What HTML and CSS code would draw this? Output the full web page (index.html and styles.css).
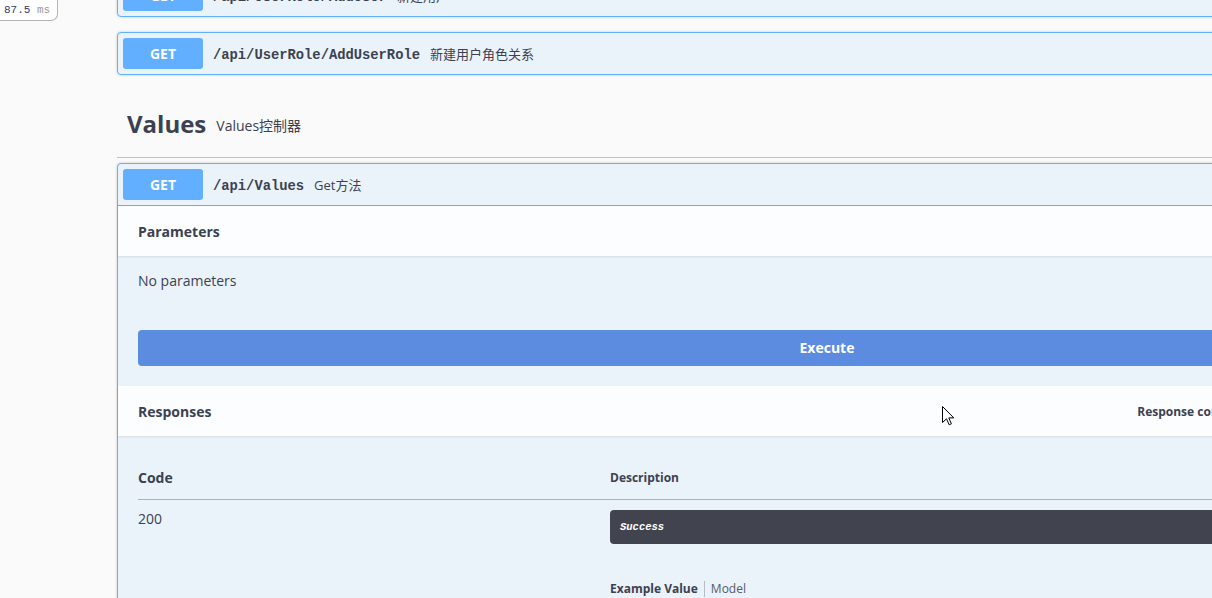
FILE: index.html
```html
<!DOCTYPE html>
<html>
<head>
<meta charset="utf-8">
<link rel="stylesheet" href="styles.css">
</head>
<body>
<div class="timer"><span class="num">87.5</span> <span class="unit">ms</span></div>

<div class="page">
  <div class="opblock">
    <div class="summary">
      <span class="method">GET</span>
      <span class="path">/api/UserRole/AddUser</span>
      <span class="desc">新建用户</span>
    </div>
  </div>

  <div class="opblock">
    <div class="summary">
      <span class="method">GET</span>
      <span class="path">/api/UserRole/AddUserRole</span>
      <span class="desc">新建用户角色关系</span>
    </div>
  </div>

  <h4 class="tag">
    <span class="tag-name">Values</span>
    <span class="tag-desc">Values控制器</span>
  </h4>

  <div class="opblock open">
    <div class="summary">
      <span class="method">GET</span>
      <span class="path">/api/Values</span>
      <span class="desc">Get方法</span>
    </div>
    <div class="section-header">
      <h5>Parameters</h5>
    </div>
    <div class="desc-wrapper">
      <p>No parameters</p>
    </div>
    <div class="exec-wrapper">
      <button class="execute">Execute</button>
    </div>
    <div class="section-header">
      <h5>Responses</h5>
      <label class="ctype">Response content type</label>
      <div class="ctype-select"></div>
    </div>
    <div class="responses-inner">
      <table class="responses">
        <thead>
          <tr><th class="col-code">Code</th><th class="col-desc">Description</th></tr>
        </thead>
        <tbody>
          <tr>
            <td class="col-code">200</td>
            <td class="col-desc">
              <div class="markdown">Success</div>
              <div class="tabs"><span class="tab active">Example Value</span><span class="tab">Model</span></div>
            </td>
          </tr>
        </tbody>
      </table>
    </div>
  </div>
</div>

<svg class="cursor" width="13" height="20" viewBox="0 0 13 20">
  <path d="M0.5 0.5 L0.5 16.5 L4.5 12.8 L7.2 18.8 L9.4 17.8 L6.8 11.9 L11.8 11.9 Z" fill="#fff" stroke="#000" stroke-width="1" stroke-linejoin="miter"/>
</svg>
</body>
</html>
```

FILE: styles.css
```css
html, body {
  margin: 0;
  padding: 0;
}
body {
  background: #fafafa;
  overflow: hidden;
  width: 1212px;
  height: 598px;
  position: relative;
  font-family: "Open Sans", "Noto Sans CJK SC", sans-serif;
  color: #3b4151;
}

.timer {
  position: absolute;
  left: 0;
  top: 0;
  width: 58px;
  height: 21px;
  box-sizing: border-box;
  border: 1px solid #b4b4b4;
  border-left: none;
  border-top: none;
  border-bottom-right-radius: 7px;
  background: #fff;
  font-family: "Liberation Mono", monospace;
  font-size: 11px;
  line-height: 20px;
  padding-left: 4px;
  z-index: 5;
}
.timer .num { color: #2f3b66; }
.timer .unit { color: #9a9a9a; }

.page {
  margin-top: -26px;
  margin-left: 117px;
  width: 1420px;
}

.opblock {
  border: 1px solid #61affe;
  border-radius: 4px;
  background: #ebf3fa;
  box-shadow: 0 0 3px rgba(0, 0, 0, 0.19);
  margin-bottom: 15px;
}
.opblock.open {
  margin-bottom: 0;
}

.summary {
  display: flex;
  align-items: center;
  padding: 5px;
  height: 31px;
}
.open .summary {
  border-bottom: 1px solid #61affe;
}

.method {
  display: flex;
  align-items: center;
  justify-content: center;
  width: 80px;
  height: 31px;
  border-radius: 3px;
  background: #61affe;
  color: #fff;
  font-weight: 700;
  font-size: 14px;
}
.path {
  font-family: "Liberation Mono", monospace;
  font-weight: 700;
  font-size: 13.8px;
  padding: 3px 10px 0;
  color: #3b4151;
}
.desc {
  font-size: 13px;
  color: #3b4151;
}

.tag {
  margin: 0 0 5px;
  height: 67px;
  display: flex;
  align-items: center;
  padding: 0 20px 0 10px;
  border-bottom: 1px solid rgba(59, 65, 81, 0.3);
  font-weight: 400;
}
.tag-name {
  font-size: 24px;
  font-weight: 700;
  margin-right: 10px;
}
.tag-desc {
  font-size: 14px;
  padding-top: 2px;
}

.section-header {
  display: flex;
  align-items: center;
  height: 50px;
  padding: 0 20px;
  background: rgba(255, 255, 255, 0.8);
  box-shadow: 0 1px 2px rgba(0, 0, 0, 0.1);
}
.section-header h5 {
  margin: 0;
  font-size: 14px;
  font-weight: 700;
}
.ctype {
  margin-left: auto;
  font-size: 12px;
  font-weight: 700;
  margin-right: 10px;
}
.ctype-select {
  width: 232px;
}

.desc-wrapper {
  padding: 16px 20px 20px;
}
.desc-wrapper p {
  margin: 0;
  font-size: 14px;
  line-height: 18px;
}

.exec-wrapper {
  padding: 20px;
}
.execute {
  display: block;
  width: 100%;
  height: 36px;
  border: none;
  border-radius: 4px;
  background: #5b8ce0;
  color: #fff;
  font-family: "Open Sans", sans-serif;
  font-weight: 700;
  font-size: 14px;
  padding: 0 0 2px;
}

.responses-inner {
  padding: 20px;
}
.responses {
  width: 100%;
  border-collapse: collapse;
}
.responses th {
  text-align: left;
  height: 43px;
  padding: 0;
  border-bottom: 1px solid rgba(59, 65, 81, 0.2);
  vertical-align: middle;
}
.responses th.col-code {
  width: 472px;
  font-size: 14px;
  font-weight: 700;
}
.responses th.col-desc {
  font-size: 12px;
  font-weight: 700;
}
.responses td {
  padding: 10px 0 0;
  vertical-align: top;
}
.responses td.col-code {
  font-size: 14px;
  line-height: 18px;
}
.markdown {
  background: #41444e;
  border-radius: 4px;
  padding: 10px;
  color: #fff;
  font-family: "Liberation Mono", monospace;
  font-style: italic;
  font-weight: 700;
  font-size: 10.5px;
  line-height: 14px;
}
.tabs {
  margin-top: 37px;
  display: flex;
  align-items: center;
  font-size: 12px;
  line-height: 16px;
}
.tab {
  color: #3b4151;
}
.tab.active {
  font-weight: 700;
  padding-right: 6px;
  border-right: 1px solid rgba(59, 65, 81, 0.3);
}
.tab + .tab {
  padding-left: 6px;
  color: #555a66;
}

.cursor {
  position: absolute;
  left: 942px;
  top: 406px;
}
```
